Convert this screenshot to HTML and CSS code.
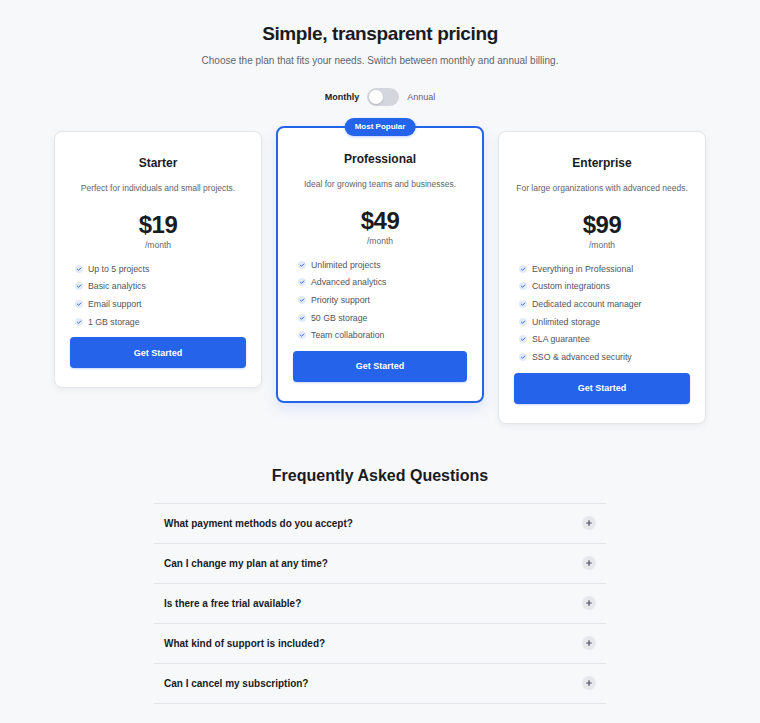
FILE: index.html
```html
<!doctype html>
<html lang="en">
  <head>
    <meta charset="utf-8" />
    <meta name="viewport" content="width=device-width, initial-scale=1" />
    <title>Pricing</title>
    <link rel="stylesheet" href="styles.css">
  </head>
  <body>
    <main class="page">
      <header class="intro">
        <h1>Simple, transparent pricing</h1>
        <p class="lead">Choose the plan that fits your needs. Switch between monthly and annual billing.</p>
        <div class="billing">
          <span class="billing-label active">Monthly</span>
          <button class="switch" id="billingSwitch" aria-label="Toggle annual billing"><span class="knob"></span></button>
          <span class="billing-label">Annual</span>
        </div>
      </header>

      <section class="plans">
        <article class="plan">
          <h2>Starter</h2>
          <p class="plan-desc">Perfect for individuals and small projects.</p>
          <div class="price">$19</div>
          <div class="period">/month</div>
          <ul class="features">
            <li><svg class="check" viewBox="0 0 10 10"><circle cx="5" cy="5" r="5" /><path d="M3 5.2l1.4 1.4L7.2 3.8" /></svg>Up to 5 projects</li>
            <li><svg class="check" viewBox="0 0 10 10"><circle cx="5" cy="5" r="5" /><path d="M3 5.2l1.4 1.4L7.2 3.8" /></svg>Basic analytics</li>
            <li><svg class="check" viewBox="0 0 10 10"><circle cx="5" cy="5" r="5" /><path d="M3 5.2l1.4 1.4L7.2 3.8" /></svg>Email support</li>
            <li><svg class="check" viewBox="0 0 10 10"><circle cx="5" cy="5" r="5" /><path d="M3 5.2l1.4 1.4L7.2 3.8" /></svg>1 GB storage</li>
          </ul>
          <button class="cta">Get Started</button>
        </article>

        <article class="plan featured">
          <span class="badge">Most Popular</span>
          <h2>Professional</h2>
          <p class="plan-desc">Ideal for growing teams and businesses.</p>
          <div class="price">$49</div>
          <div class="period">/month</div>
          <ul class="features">
            <li><svg class="check" viewBox="0 0 10 10"><circle cx="5" cy="5" r="5" /><path d="M3 5.2l1.4 1.4L7.2 3.8" /></svg>Unlimited projects</li>
            <li><svg class="check" viewBox="0 0 10 10"><circle cx="5" cy="5" r="5" /><path d="M3 5.2l1.4 1.4L7.2 3.8" /></svg>Advanced analytics</li>
            <li><svg class="check" viewBox="0 0 10 10"><circle cx="5" cy="5" r="5" /><path d="M3 5.2l1.4 1.4L7.2 3.8" /></svg>Priority support</li>
            <li><svg class="check" viewBox="0 0 10 10"><circle cx="5" cy="5" r="5" /><path d="M3 5.2l1.4 1.4L7.2 3.8" /></svg>50 GB storage</li>
            <li><svg class="check" viewBox="0 0 10 10"><circle cx="5" cy="5" r="5" /><path d="M3 5.2l1.4 1.4L7.2 3.8" /></svg>Team collaboration</li>
          </ul>
          <button class="cta">Get Started</button>
        </article>

        <article class="plan">
          <h2>Enterprise</h2>
          <p class="plan-desc">For large organizations with advanced needs.</p>
          <div class="price">$99</div>
          <div class="period">/month</div>
          <ul class="features">
            <li><svg class="check" viewBox="0 0 10 10"><circle cx="5" cy="5" r="5" /><path d="M3 5.2l1.4 1.4L7.2 3.8" /></svg>Everything in Professional</li>
            <li><svg class="check" viewBox="0 0 10 10"><circle cx="5" cy="5" r="5" /><path d="M3 5.2l1.4 1.4L7.2 3.8" /></svg>Custom integrations</li>
            <li><svg class="check" viewBox="0 0 10 10"><circle cx="5" cy="5" r="5" /><path d="M3 5.2l1.4 1.4L7.2 3.8" /></svg>Dedicated account manager</li>
            <li><svg class="check" viewBox="0 0 10 10"><circle cx="5" cy="5" r="5" /><path d="M3 5.2l1.4 1.4L7.2 3.8" /></svg>Unlimited storage</li>
            <li><svg class="check" viewBox="0 0 10 10"><circle cx="5" cy="5" r="5" /><path d="M3 5.2l1.4 1.4L7.2 3.8" /></svg>SLA guarantee</li>
            <li><svg class="check" viewBox="0 0 10 10"><circle cx="5" cy="5" r="5" /><path d="M3 5.2l1.4 1.4L7.2 3.8" /></svg>SSO &amp; advanced security</li>
          </ul>
          <button class="cta">Get Started</button>
        </article>
      </section>

      <section class="faq">
        <h2>Frequently Asked Questions</h2>
        <div class="faq-list">
          <div class="faq-item"><span>What payment methods do you accept?</span><svg class="plus" viewBox="0 0 14 14"><circle cx="7" cy="7" r="7" /><path d="M7 4.3v5.4M4.3 7h5.4" /></svg></div>
          <div class="faq-item"><span>Can I change my plan at any time?</span><svg class="plus" viewBox="0 0 14 14"><circle cx="7" cy="7" r="7" /><path d="M7 4.3v5.4M4.3 7h5.4" /></svg></div>
          <div class="faq-item"><span>Is there a free trial available?</span><svg class="plus" viewBox="0 0 14 14"><circle cx="7" cy="7" r="7" /><path d="M7 4.3v5.4M4.3 7h5.4" /></svg></div>
          <div class="faq-item"><span>What kind of support is included?</span><svg class="plus" viewBox="0 0 14 14"><circle cx="7" cy="7" r="7" /><path d="M7 4.3v5.4M4.3 7h5.4" /></svg></div>
          <div class="faq-item"><span>Can I cancel my subscription?</span><svg class="plus" viewBox="0 0 14 14"><circle cx="7" cy="7" r="7" /><path d="M7 4.3v5.4M4.3 7h5.4" /></svg></div>
        </div>
      </section>
    </main>
  </body>
</html>
```

FILE: styles.css
```css
:root {
  --bg-color: #f7f8fa;
  --card-color: #ffffff;
  --text-color: #1a1b1f;
  --muted-color: #5f6470;
  --feature-color: #50555f;
  --border-color: #e3e5e9;
  --primary-color: #2563eb;
}

* {
  box-sizing: border-box;
}

body {
  margin: 0;
  font-family: 'Liberation Sans', Arial, sans-serif;
  background-color: var(--bg-color);
  color: var(--text-color);
}

.page {
  max-width: 652px;
  margin: 0 auto;
  padding: 22px 0 40px;
}

.intro {
  text-align: center;
}

h1 {
  font-size: 19px;
  line-height: 23px;
  letter-spacing: -0.02em;
  margin: 0;
}

.lead {
  font-size: 10px;
  line-height: 15px;
  color: var(--muted-color);
  margin: 8px 0 0;
}

.billing {
  display: flex;
  align-items: center;
  justify-content: center;
  gap: 8px;
  margin-top: 20px;
}

.billing-label {
  font-size: 9px;
  color: var(--muted-color);
}

.billing-label.active {
  font-weight: 700;
  color: var(--text-color);
}

.switch {
  width: 32px;
  height: 18px;
  padding: 2px;
  border: none;
  border-radius: 9px;
  background: #d3d6dc;
  display: flex;
  align-items: center;
  cursor: pointer;
}

.knob {
  width: 14px;
  height: 14px;
  border-radius: 50%;
  background: #ffffff;
  box-shadow: 0 1px 2px rgba(0, 0, 0, 0.15);
}

.plans {
  display: grid;
  grid-template-columns: repeat(3, 1fr);
  gap: 14px;
  align-items: start;
  margin-top: 25px;
}

.plan {
  position: relative;
  background: var(--card-color);
  border: 1px solid var(--border-color);
  border-radius: 8px;
  box-shadow: 0 2px 6px rgba(15, 23, 42, 0.06);
  padding: 24px 15px 19px;
  text-align: center;
}

.plan.featured {
  border: 2px solid var(--primary-color);
  transform: translateY(-5px);
  box-shadow: 0 6px 14px rgba(37, 99, 235, 0.12);
}

.badge {
  position: absolute;
  top: -10px;
  left: 50%;
  transform: translateX(-50%);
  background: var(--primary-color);
  color: #ffffff;
  font-size: 8px;
  font-weight: 700;
  line-height: 10px;
  padding: 4px 10px;
  border-radius: 9px;
  white-space: nowrap;
  box-shadow: 0 1px 3px rgba(37, 99, 235, 0.3);
}

.plan h2 {
  font-size: 12px;
  line-height: 15px;
  margin: 0;
}

.plan-desc {
  font-size: 8.5px;
  line-height: 13px;
  color: var(--muted-color);
  margin: 11px 0 0;
}

.price {
  font-size: 24px;
  line-height: 24px;
  font-weight: 700;
  letter-spacing: -0.5px;
  margin-top: 18px;
}

.period {
  font-size: 8.5px;
  line-height: 12px;
  color: var(--muted-color);
  margin-top: 2px;
}

.features {
  list-style: none;
  margin: 9px 0 7px;
  padding: 0 5px;
  text-align: left;
}

.features li {
  display: flex;
  align-items: center;
  gap: 5px;
  height: 17.6px;
  font-size: 8.75px;
  color: var(--feature-color);
}

.check {
  width: 8px;
  height: 8px;
  flex: none;
}

.check circle {
  fill: #e3ebfb;
}

.check path {
  fill: none;
  stroke: var(--primary-color);
  stroke-width: 1.2;
  stroke-linecap: round;
  stroke-linejoin: round;
}

.cta {
  display: block;
  width: 100%;
  height: 31px;
  border: none;
  border-radius: 4px;
  background: var(--primary-color);
  color: #ffffff;
  font-family: inherit;
  font-size: 9px;
  font-weight: 700;
  cursor: pointer;
  box-shadow: 0 1px 2px rgba(37, 99, 235, 0.25);
}

.faq {
  max-width: 452px;
  margin: 42px auto 0;
}

.faq h2 {
  font-size: 16px;
  line-height: 20px;
  text-align: center;
  margin: 0 0 17px;
}

.faq-list {
  border-top: 1px solid var(--border-color);
}

.faq-item {
  display: flex;
  align-items: center;
  justify-content: space-between;
  height: 40px;
  padding: 0 10px;
  border-bottom: 1px solid var(--border-color);
  font-size: 10px;
  font-weight: 700;
}

.plus {
  width: 14px;
  height: 14px;
  flex: none;
}

.plus circle {
  fill: #e6e8ec;
}

.plus path {
  fill: none;
  stroke: #4b5060;
  stroke-width: 1.2;
}
```
